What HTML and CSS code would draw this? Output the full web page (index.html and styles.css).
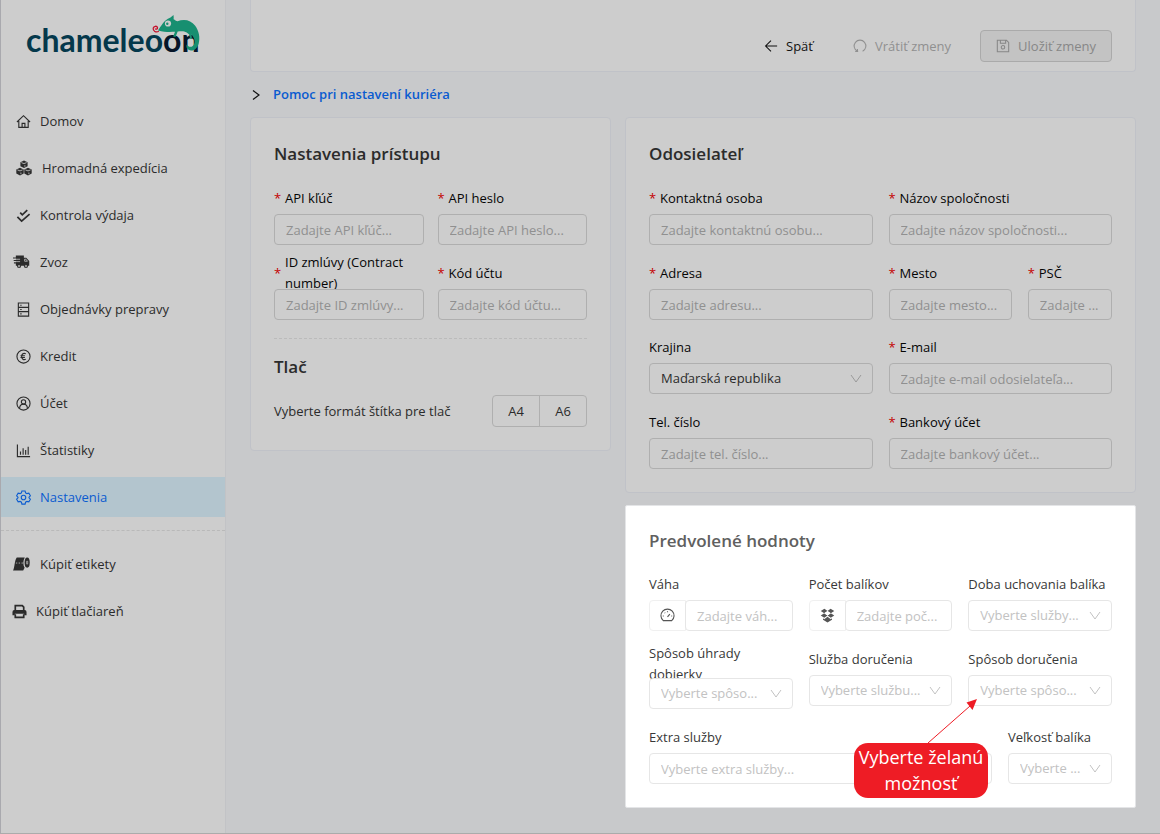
FILE: index.html
```html
<!DOCTYPE html>
<html lang="sk">
<head>
<meta charset="utf-8">
<meta name="viewport" content="width=device-width, initial-scale=1">
<title>Chameleoon – Nastavenia</title>
<link rel="stylesheet" href="styles.css">
</head>
<body>
<div class="layout">
  <aside class="sidebar">
    <a class="logo" href="#" aria-label="chameleoon">
      <span class="logo-text">chameleo<span class="logo-end">on</span></span>
      <svg class="logo-mark" viewBox="0 0 50 40" width="50" height="40" aria-hidden="true">
        <path d="M6 18.500C9 14 12 9 15.500 7c2-1 4-2 6-4 .3 1.600.2 3 .1 4.200C23 8 24 9 25.500 9.300 32 6.500 39 8 43 13.500c4 5.500 5.300 12 3.700 18-1.300 4.500-4 7.300-7.700 7-3.300-.3-5.500-3-4.200-6 1.500 2.500 4 3.200 6.200 1.200 2.500-2.500 2-6.500-.7-10.200l-.8-1 .5 4.500-1.800-.2-1-4.300-2.500-2c-3-1.800-6-1.200-9-.9l-2.200 5.400-2.300-.4 1.800-4.800c-5 .2-10 .5-17-1.300z" fill="#178f70"/>
        <circle cx="16" cy="11.500" r="3.100" fill="#cdcdcd"/><circle cx="15.300" cy="11.700" r="1.200" fill="#178f70"/>
        <path d="M6.800 19.300C4 21 .8 19 1.200 16.200c.5-2.300 3.800-2.600 4.300-.6.300 1.500-1.800 2.200-2.200.9" fill="none" stroke="#c4112b" stroke-width="1.300"/>
      </svg>
    </a>
    <nav class="menu">
      <a class="item" href="#"><svg class="icon" viewBox="0 0 16 16"><path d="M1 8.500 8 1.800l7 6.700M3 7.500V14.300h10V7.500M6.500 14v-4h3v4"/></svg>Domov</a>
      <a class="item item-wide" href="#"><svg class="icon icon-boxes icon-solid" viewBox="0 0 16 16"><path d="M8 .5l3.600 1.700v4L8 8 4.400 6.200v-4zM4 7.800l3.700 1.700v4L4 15.400.3 13.500v-4zM12 7.800l3.700 1.700v4L12 15.400l-3.700-1.900v-4z"/><path class="cut" d="M5.400 2.600 8 3.600l2.600-1M8.900 5.200v1.600M1.400 9.900 4 10.900l2.600-1M4.900 12.500v1.700M9.400 9.900l2.600 1 2.600-1M12.900 12.500v1.700"/></svg>Hromadná expedícia</a>
      <a class="item" href="#"><svg class="icon icon-bold" viewBox="0 0 16 16"><path d="m4.500 5 2.200 2.300L12 2.300M1.500 9.500l4.500 4.500 8.500-7.500"/></svg>Kontrola výdaja</a>
      <a class="item item-out" href="#"><svg class="icon icon-big icon-solid" viewBox="0 0 18 16"><path d="M3 1h8.500v2.500H14L17.200 7v5H16a2.300 2.300 0 0 1-4.600 0H8.700a2.300 2.300 0 0 1-4.600 0H3V9.500H1V8.300h2V7H.7V5.800H3V4.400H0V3.200h3z"/><path class="cut" d="M2 5.100h5.500M2 7.600h5.500M12.300 5h1.300l1.700 2.200h-3z"/><circle class="cut" cx="6.400" cy="12.300" r=".8"/><circle class="cut" cx="13.700" cy="12.300" r=".8"/></svg>Zvoz</a>
      <a class="item" href="#"><svg class="icon" viewBox="0 0 16 16"><path d="M2.500 1h11v14h-11zM2.500 5.700h11M2.500 10.300h11M4.500 3.400h1.500M4.500 8H6M4.500 12.700H6"/></svg>Objednávky prepravy</a>
      <a class="item" href="#"><svg class="icon" viewBox="0 0 16 16"><circle cx="8" cy="8" r="7"/><path d="M10.500 5.200C8 3.800 6 5.500 6 8s2 4.200 4.500 2.800M4.800 7.200h4.700M4.800 9h4.700"/></svg>Kredit</a>
      <a class="item" href="#"><svg class="icon" viewBox="0 0 16 16"><circle cx="8" cy="8" r="7"/><circle cx="8" cy="6.300" r="2.300"/><path d="M3.800 13c.5-5.700 7.900-5.700 8.400 0"/></svg>Účet</a>
      <a class="item" href="#"><svg class="icon" viewBox="0 0 16 16"><path d="M1.500 1.500v13H15M4.800 12.500V9M7.600 12.500V5.500M10.300 12.500V7.500M13 12.500V4"/></svg>Štatistiky</a>
      <a class="item item-active" href="#" aria-current="page"><svg class="icon" viewBox="0 0 16 16"><path d="M6.300 1h3.400l.5 2 1.500.9 2-.6 1.700 2.900-1.500 1.400v.8l1.500 1.400-1.700 2.900-2-.6-1.500.9-.5 2H6.300l-.5-2-1.500-.9-2 .6L.6 9.800l1.500-1.400v-.8L.6 6.200l1.700-2.900 2 .6L5.800 3z"/><circle cx="8" cy="8" r="2.400"/></svg>Nastavenia</a>
    </nav>
    <nav class="menu menu-shop">
      <a class="item item-out" href="#"><svg class="icon icon-big icon-solid" viewBox="0 0 18 16"><path d="M4 1h8.500c-2 3-2 8-.2 11l-1.500 3H0c2-4 1.500-11 4-14z"/><ellipse cx="15" cy="6.500" rx="2.700" ry="5.500"/><path class="cut" d="M3 7h1.500M6 7h1.500M9 7h1.500"/><ellipse class="cut" cx="15" cy="6.500" rx=".6" ry="1.800"/></svg>Kúpiť etikety</a>
      <a class="item item-near" href="#"><svg class="icon icon-bold" viewBox="0 0 16 16"><path d="M3.500 7V1.800h7.500l1.500 1.500V7M3.500 11v3.300h9V11"/><path class="fill" stroke="none" d="M2.500 6.500h11a2 2 0 0 1 2 2V12H13v-1.500H3V12H.5V8.500a2 2 0 0 1 2-2z"/></svg>Kúpiť tlačiareň</a>
    </nav>
  </aside>

  <main class="main">
    <header class="toolbar">
      <button class="btn btn-back" type="button"><svg class="icon" viewBox="0 0 16 16"><path d="M15 8H2M8 1.800 1.800 8 8 14.200"/></svg>Späť</button>
      <button class="btn btn-muted" type="button" disabled><svg class="icon" viewBox="0 0 16 16"><path d="M5 14A6.700 6.700 0 1 1 11 14M2.500 14.300 5.300 14.300 5 11.500"/></svg>Vrátiť zmeny</button>
      <button class="btn btn-save" type="button" disabled><svg class="icon" viewBox="0 0 16 16"><path d="M1.500 1.500h10.500l2.500 2.500v10.500h-13zM5 1.500v3.300h6V1.500"/><circle cx="8" cy="9.500" r="2"/></svg>Uložiť zmeny</button>
    </header>

    <details class="help"><summary><svg class="caret" viewBox="0 0 8 10" width="8" height="10"><path d="m1 .5 6 4.500-6 4.500"/></svg><span>Pomoc pri nastavení kuriéra</span></summary></details>

    <div class="columns">
      <section class="card">
        <h2>Nastavenia prístupu</h2>
        <div class="grid grid-two-tight">
          <div class="field"><label class="req" for="api-key">API kľúč</label><input id="api-key" placeholder="Zadajte API kľúč..."></div>
          <div class="field"><label class="req" for="api-pass">API heslo</label><input id="api-pass" placeholder="Zadajte API heslo..."></div>
          <div class="field"><label class="req" for="contract">ID zmlúvy (Contract number)</label><input id="contract" placeholder="Zadajte ID zmlúvy..."></div>
          <div class="field"><label class="req" for="acc-code">Kód účtu</label><input id="acc-code" placeholder="Zadajte kód účtu..."></div>
        </div>
        <hr>
        <h2>Tlač</h2>
        <div class="print-row">
          <span>Vyberte formát štítka pre tlač</span>
          <div class="segmented"><button type="button">A4</button><button type="button">A6</button></div>
        </div>
      </section>

      <div class="stack">
        <section class="card">
          <h2>Odosielateľ</h2>
          <div class="grid grid-two">
            <div class="field"><label class="req" for="contact">Kontaktná osoba</label><input id="contact" placeholder="Zadajte kontaktnú osobu..."></div>
            <div class="field"><label class="req" for="company">Názov spoločnosti</label><input id="company" placeholder="Zadajte názov spoločnosti..."></div>
            <div class="field"><label class="req" for="address">Adresa</label><input id="address" placeholder="Zadajte adresu..."></div>
            <div class="grid grid-city">
              <div class="field"><label class="req" for="city">Mesto</label><input id="city" placeholder="Zadajte mesto..."></div>
              <div class="field"><label class="req" for="zip">PSČ</label><input id="zip" placeholder="Zadajte ..."></div>
            </div>
          </div>
          <div class="grid grid-two grid-next">
            <div class="field"><label for="country">Krajina</label><select id="country"><option>Maďarská republika</option></select></div>
            <div class="field"><label class="req" for="email">E-mail</label><input id="email" type="email" placeholder="Zadajte e-mail odosielateľa..."></div>
            <div class="field"><label for="phone">Tel. číslo</label><input id="phone" type="tel" placeholder="Zadajte tel. číslo..."></div>
            <div class="field"><label class="req" for="bank">Bankový účet</label><input id="bank" placeholder="Zadajte bankový účet..."></div>
          </div>
        </section>

        <section class="card card-focus">
          <h2>Predvolené hodnoty</h2>
          <div class="grid grid-three">
            <div class="field"><label for="weight">Váha</label>
              <div class="addon-input"><span class="addon"><svg class="icon" viewBox="0 0 16 16"><path d="M3.500 13.500a7 7 0 1 1 9 0zM8 9.500l2.500-3M3 8.500h1M5 5l.5.5M8 3.500v1M12 8.500h1"/></svg></span><input id="weight" placeholder="Zadajte váh..."></div></div>
            <div class="field"><label for="count">Počet balíkov</label>
              <div class="addon-input"><span class="addon"><svg class="icon icon-solid" viewBox="0 0 16 16"><path d="M4.700.8 8 3.300 4.500 5.600.8 3.200zM11.300.8l3.900 2.400-3.700 2.400L8 3.300zM.8 8l3.700-2.400L8 8l-3.500 2.400zM15.200 8l-3.700-2.400L8 8l3.500 2.400zM8 9.300l3.500 2.600 1.300-.9v1.400L8 15.500l-4.800-3.100V11l1.300.9z"/><path class="hole" d="M4.500 5.600 8 3.300l3.500 2.300L8 8z"/></svg></span><input id="count" placeholder="Zadajte poč..."></div></div>
            <div class="field"><label for="keep">Doba uchovania balíka</label><select id="keep"><option>Vyberte služby...</option></select></div>
            <div class="field"><label class="tall" for="cod">Spôsob úhrady dobierky</label><select id="cod"><option>Vyberte spôso...</option></select></div>
            <div class="field"><label for="service">Služba doručenia</label><select id="service"><option>Vyberte službu...</option></select></div>
            <div class="field"><label for="delivery">Spôsob doručenia</label><select id="delivery"><option>Vyberte spôso...</option></select></div>
          </div>
          <div class="grid grid-extra">
            <div class="field"><label for="extra">Extra služby</label><input id="extra" placeholder="Vyberte extra služby..."></div>
            <div class="field"><label for="size">Veľkosť balíka</label><select id="size"><option>Vyberte ...</option></select></div>
          </div>
          <div class="callout" role="note">
            <svg class="pointer" viewBox="0 0 50 44" width="50" height="44" aria-hidden="true"><path d="M0 44 42 7" stroke="#ee1c25"/><path d="M49 0 38.500 3.500 44.500 11z" fill="#ee1c25"/></svg>
            Vyberte želanú možnosť
          </div>
        </section>
      </div>
    </div>
  </main>
</div>
</body>
</html>
```
FILE: styles.css
```css
* { box-sizing: border-box; }

body {
  margin: 0;
  background: #c8c9cb;
  color: #2b2b2b;
  font: 13px/21px "Open Sans", "Noto Sans", sans-serif;
}

a { color: inherit; text-decoration: none; }
button, input, select { font: inherit; color: inherit; }

.layout {
  display: flex;
  min-height: 100vh;
  border-left: 1px solid #a9a9ae;
  border-bottom: 1px solid #ababab;
}

.sidebar {
  flex: 0 0 225px;
  background: #cdcdcd;
  border-right: 1px solid #c2c3c6;
}

.logo {
  position: relative;
  display: block;
  height: 101px;
  padding: 20px 0 0 25px;
}
.logo-text { font: 700 32px/40px Lato, sans-serif; color: #04384b; }
.logo-end { color: #061529; }
.logo-mark { position: absolute; left: 151px; top: 12px; }

.menu { display: flex; flex-direction: column; gap: 7px; }
.menu-shop {
  margin-top: 13px;
  padding-top: 13px;
  border-top: 1px dashed #b9b9b9;
}
.item {
  display: flex;
  align-items: center;
  gap: 9px;
  height: 40px;
  padding-left: 15px;
}
.item-wide { gap: 10px; }
.item-out { gap: 10px; padding-left: 12px; }
.item-near { padding-left: 11px; }
.item-active { background: #b3c5ce; color: #0a5bd0; }

.icon {
  flex: none;
  width: 15px;
  height: 15px;
  fill: none;
  stroke: currentColor;
  stroke-width: 1.200;
}
.icon-big { width: 17px; height: 16px; }
.icon-boxes { width: 16px; height: 16px; }
.icon-bold { stroke-width: 1.800; }
.icon-solid { fill: currentColor; stroke: none; }
.icon .fill { fill: currentColor; }
.icon .cut { fill: none; stroke: #cdcdcd; stroke-width: .8; }
.icon .hole { fill: #fff; }

.main { flex: 1; min-width: 0; padding: 0 24px; }

.toolbar {
  display: flex;
  justify-content: flex-end;
  align-items: flex-end;
  height: 72px;
  padding: 0 23px 9px;
  background: #cdcdcd;
  border: 1px solid #c0c2c8;
  border-top: 0;
  border-radius: 0 0 4px 4px;
}
.btn {
  display: flex;
  align-items: center;
  gap: 8px;
  height: 32px;
  padding: 0;
  border: 0;
  background: none;
}
.btn .icon { width: 14px; height: 14px; }
.btn-back { color: #111; }
.btn-muted { margin: 0 29px 0 40px; color: #909090; }
.btn-save {
  padding: 0 15px;
  background: #c3c3c3;
  border: 1px solid #aaa;
  border-radius: 4px;
  color: #878787;
}

.help summary {
  display: flex;
  align-items: center;
  gap: 13px;
  height: 45px;
  padding-left: 2px;
  color: #0a5bd0;
  font-weight: 600;
  list-style: none;
}
.caret { fill: none; stroke: #111; stroke-width: 1.300; }

.columns {
  display: grid;
  grid-template-columns: 361fr 511fr;
  gap: 14px;
  align-items: start;
}
.stack { display: grid; gap: 12px; }

.card {
  position: relative;
  padding: 23px;
  background: #cdcdcd;
  border: 1px solid #c0c2c8;
  border-radius: 4px;
}
.card h2 {
  margin: 0 0 15px;
  font-size: 17px;
  line-height: 26px;
  font-weight: 600;
}
.card hr {
  margin: 18px 0 15px;
  border: 0;
  border-top: 1px dashed #bbb;
}

.grid { display: grid; gap: 12px 16px; }
.grid-two-tight { grid-template-columns: 1fr 1fr; column-gap: 14px; }
.grid-two { grid-template-columns: 1fr 1fr; }
.grid-next { margin-top: 11px; }
.grid-city { grid-template-columns: 123fr 84fr; }
.grid-three { grid-template-columns: repeat(3, 1fr); }
.grid-extra { grid-template-columns: 343fr 104fr; margin-top: 12px; }

.field { display: flex; flex-direction: column; min-width: 0; }
.field label {
  display: flex;
  align-items: center;
  height: 32px;
  color: #050505;
}
.field label.tall { height: 35px; align-items: flex-start; }
.req::before { content: "*"; flex: none; width: 11px; color: #c40000; }

input, select {
  width: 100%;
  min-width: 0;
  height: 31px;
  padding: 0 11px;
  background-color: #cdcdcd;
  border: 1px solid #afafaf;
  border-radius: 4px;
}
input::placeholder { color: #909090; opacity: 1; }
select {
  appearance: none;
  background-image: url("data:image/svg+xml,%3Csvg xmlns='http://www.w3.org/2000/svg' width='12' height='9'%3E%3Cpath d='M1 1l5 7 5-7' fill='none' stroke='%23999'/%3E%3C/svg%3E");
  background-repeat: no-repeat;
  background-position: right 10px center;
}

.print-row { display: flex; justify-content: space-between; align-items: center; }
.segmented { display: flex; }
.segmented button {
  width: 48px;
  height: 32px;
  padding: 0;
  background: none;
  border: 1px solid #afafaf;
  border-radius: 4px 0 0 4px;
}
.segmented button + button { margin-left: -1px; border-radius: 0 4px 4px 0; }

.card-focus {
  padding-top: 22px;
  background: #fff;
  border-color: #e4e5e7;
  border-radius: 2px;
}
.card-focus h2 { margin-bottom: 14px; color: #606060; }
.card-focus label { color: #383838; }
.card-focus input, .card-focus select { background-color: #fff; border-color: #e6e6e6; color: #c2c2c2; }
.card-focus select {
  background-image: url("data:image/svg+xml,%3Csvg xmlns='http://www.w3.org/2000/svg' width='12' height='9'%3E%3Cpath d='M1 1l5 7 5-7' fill='none' stroke='%23c2c2c2'/%3E%3C/svg%3E");
}
.card-focus input::placeholder { color: #c2c2c2; }

.addon-input { display: flex; }
.addon {
  display: flex;
  flex: 0 0 37px;
  align-items: center;
  justify-content: center;
  margin-right: -1px;
  border: 1px solid #f0f0f0;
  border-radius: 4px 0 0 4px;
  color: #555;
}

.callout {
  position: absolute;
  right: 147px;
  bottom: 9px;
  width: 134px;
  padding: 1px 0 2px;
  background: #ee1c25;
  border-radius: 14px;
  color: #fff;
  font-size: 18px;
  line-height: 26px;
  text-align: center;
}
.pointer { position: absolute; left: 74px; bottom: 100%; fill: none; }
```
